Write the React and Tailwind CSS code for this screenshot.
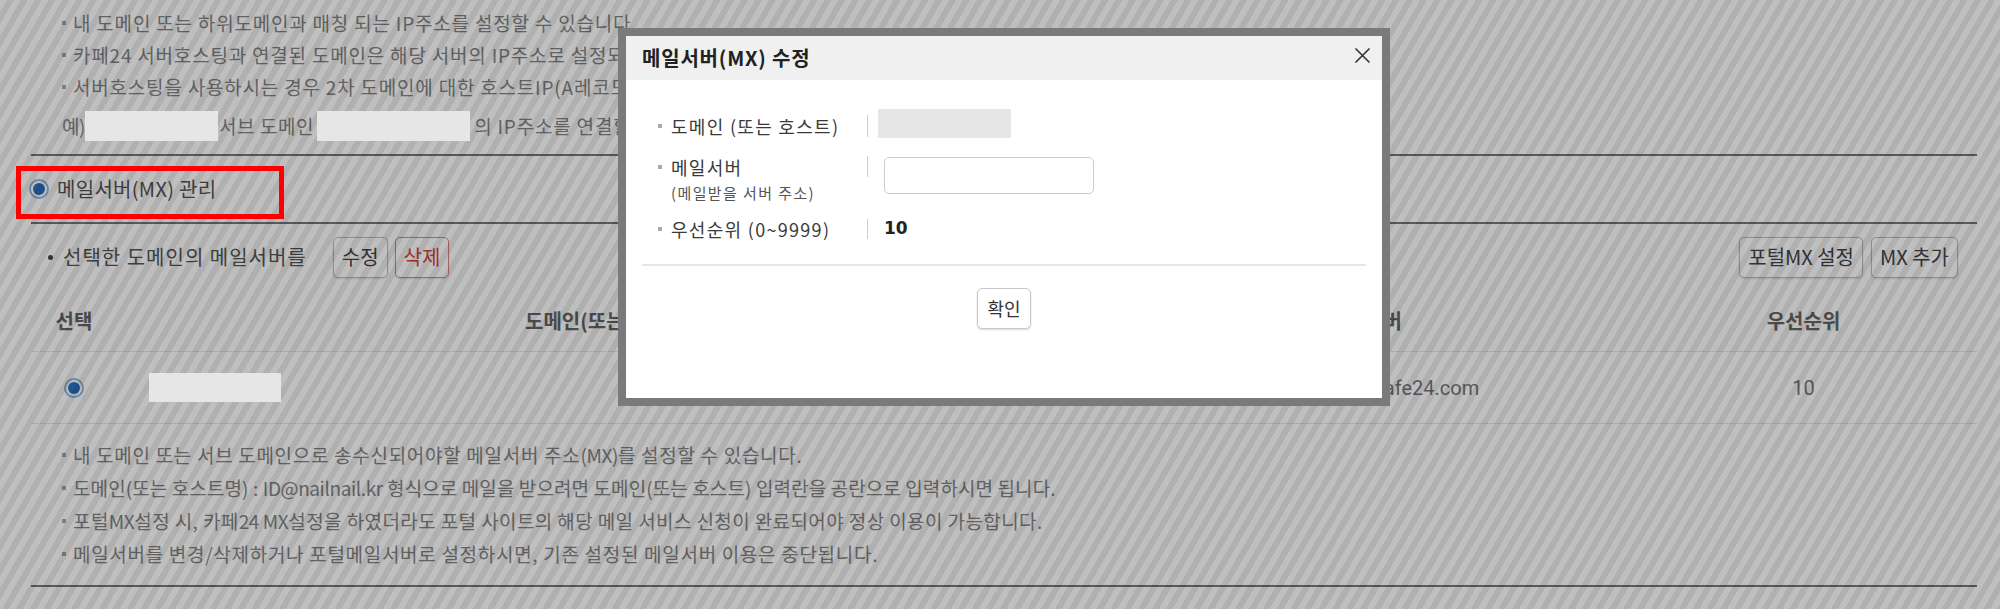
const font = "font-['Noto_Sans_CJK_KR','Noto_Sans',sans-serif]";

function Radio() {
  return (
    <span className="w-[20px] h-[20px] rounded-full border-[2px] border-[#8cb4e0] bg-white flex items-center justify-center shrink-0">
      <span className="w-[12px] h-[12px] rounded-full bg-[#2a70c0]" />
    </span>
  );
}

function Note({ children, className = "" }) {
  return (
    <div className={`flex items-center ${className}`}>
      <span className="w-[4px] h-[4px] bg-[#a8a8a8] mr-[7px] shrink-0" />
      <span>{children}</span>
    </div>
  );
}

// latin runs in the notes are narrower in the original font
function Lat({ children }) {
  return <span className="tracking-[-0.4px]">{children}</span>;
}

function Btn({ children, danger }) {
  return (
    <button
      className={
        danger
          ? "h-[41px] px-[8px] border border-[#e08585] rounded-[5px] bg-white text-[20px] text-[#d8413a] shadow-[0_1px_2px_rgba(0,0,0,0.12)]"
          : "h-[41px] px-[8px] border border-[#bdbdbd] rounded-[5px] bg-white text-[20px] text-[#444] shadow-[0_1px_2px_rgba(0,0,0,0.12)]"
      }
    >
      {children}
    </button>
  );
}

function Redact({ w, h }) {
  return <span className={`relative z-30 inline-block bg-[#e6e6e6] ${w} ${h}`} />;
}

function Modal() {
  return (
    <div className="absolute z-40 left-[618px] top-[28px] w-[772px] h-[378px] border-[8px] border-[#7a7a7a] bg-white flex flex-col">
      <div className="h-[44px] bg-[#f0f0f0] flex items-center justify-between pl-[16px] pr-[11px]">
        <span className="text-[20px] font-bold text-[#222] tracking-[0.8px]">메일서버(MX) 수정</span>
        <svg width="17" height="17" viewBox="0 0 17 17" className="mt-[-6px]">
          <path d="M1.5 1.5 L15.5 15.5 M15.5 1.5 L1.5 15.5" stroke="#333" strokeWidth="1.6" />
        </svg>
      </div>
      <div className="pt-[26px] pl-[32px] flex flex-col">
        <div className="h-[40px] flex items-center">
          <div className="w-[209px] flex items-center">
            <span className="w-[4px] h-[4px] bg-[#aaa] mr-[9px]" />
            <span className="text-[18px] text-[#3a3a3a] tracking-[1.3px]">도메인 (또는 호스트)</span>
          </div>
          <span className="h-[22px] border-l border-[#cfcfcf]" />
          <Redact w="w-[133px] ml-[10px] mt-[-6px]" h="h-[29px]" />
        </div>
        <div className="mt-[8px] flex items-start">
          <div className="w-[209px] flex flex-col">
            <div className="flex items-center h-[26px]">
              <span className="w-[4px] h-[4px] bg-[#aaa] mr-[9px]" />
              <span className="text-[18px] text-[#3a3a3a] tracking-[1.3px]">메일서버</span>
            </div>
            <span className="pl-[13px] h-[26px] leading-[26px] text-[15px] text-[#555] tracking-[1.4px]">(메일받을 서버 주소)</span>
          </div>
          <span className="mt-[2px] h-[21px] border-l border-[#cfcfcf]" />
          <input className="ml-[16px] mt-[3px] w-[210px] h-[37px] border border-[#cccccc] rounded-[5px] outline-none" />
        </div>
        <div className="mt-[8px] h-[30px] flex items-center">
          <div className="w-[209px] flex items-center">
            <span className="w-[4px] h-[4px] bg-[#aaa] mr-[9px]" />
            <span className="text-[18px] text-[#3a3a3a] tracking-[1.3px]">우선순위 (0~9999)</span>
          </div>
          <span className="h-[20px] border-l border-[#cfcfcf]" />
          <span className="ml-[16px] text-[17px] font-bold text-[#222] font-['DejaVu_Sans',sans-serif]">10</span>
        </div>
      </div>
      <div className="mt-[20px] mx-[16px] border-t-2 border-[#e6e6e6]" />
      <div className="mt-[22px] flex justify-center">
        <button className="h-[41px] px-[9px] border border-[#c8c8c8] rounded-[5px] bg-white text-[18px] text-[#333] shadow-[0_1px_2px_rgba(0,0,0,0.15)]">
          확인
        </button>
      </div>
    </div>
  );
}

export default function App() {
  return (
    <div className={`relative w-[2000px] h-[609px] overflow-hidden bg-white ${font}`}>
      {/* top notes */}
      <div className="pl-[62px] pt-[7px] text-[19px] text-[#858585] tracking-[0.8px]">
        <div className="leading-[32px]">
          <Note>내 도메인 또는 하위도메인과 매칭 되는 IP주소를 설정할 수 있습니다.</Note>
          <Note>카페24 서버호스팅과 연결된 도메인은 해당 서버의 IP주소로 설정되어 있습니다.</Note>
          <Note>서버호스팅을 사용하시는 경우 2차 도메인에 대한 호스트IP(A레코드)를 설정할 수 있습니다.</Note>
        </div>
        <div className="mt-[8px] h-[30px] flex items-center">
          <span className="tracking-[-0.5px]">예)</span>
          <Redact w="w-[133px]" h="h-[30px]" />
          <span className="ml-[1px] tracking-[0.6px]">서브 도메인</span>
          <Redact w="w-[153px] ml-[3px]" h="h-[30px]" />
          <span className="ml-[4px]">의 IP주소를 연결할 수 있습니다.</span>
        </div>
      </div>
      <div className="mt-[13px] ml-[31px] mr-[23px] border-t-2 border-[#777]" />

      {/* section heading */}
      <div className="relative h-[66px] pl-[29px] flex items-center gap-[8px]">
        <Radio />
        <span className="text-[20px] text-[#555] tracking-[0.3px]">메일서버(MX) 관리</span>
        <div className="absolute z-30 left-[16px] top-[10px] w-[268px] h-[53px] border-[5px] border-[#ff0000]" />
      </div>
      <div className="ml-[31px] mr-[23px] border-t-2 border-[#777]" />

      {/* toolbar */}
      <div className="ml-[31px] mr-[23px] h-[66px] bg-[#fdfdfd] flex items-center justify-between pl-[17px] pr-[19px]">
        <div className="flex items-center">
          <span className="w-[5px] h-[5px] rounded-full bg-[#444] mr-[10px]" />
          <span className="text-[20px] text-[#555] tracking-[1px]">선택한 도메인의 메일서버를</span>
          <div className="ml-[26px] flex gap-[7px]">
            <Btn>수정</Btn>
            <Btn danger>삭제</Btn>
          </div>
        </div>
        <div className="flex gap-[8px]">
          <Btn>포털MX 설정</Btn>
          <Btn>MX 추가</Btn>
        </div>
      </div>

      {/* table */}
      <div className="ml-[31px] mr-[23px]">
        <div className="h-[62px] grid grid-cols-[86px_983px_530px_1fr] items-center border-b border-[#e5e5e5] bg-[#fdfdfd] text-[20px] font-bold text-[#666] text-center">
          <span>선택</span>
          <span>도메인(또는 호스트)</span>
          <span>메일서버</span>
          <span>우선순위</span>
        </div>
        <div className="h-[72px] grid grid-cols-[86px_983px_530px_1fr] items-center border-b border-[#e5e5e5] text-[20px] text-[#777]">
          <span className="flex justify-center"><Radio /></span>
          <span className="pl-[32px] flex"><Redact w="w-[132px]" h="h-[29px]" /></span>
          <span className="text-center font-['Roboto',sans-serif]">mx.nailnail-kr.cafe24.com</span>
          <span className="text-center font-['Roboto',sans-serif]">10</span>
        </div>
      </div>

      {/* bottom notes */}
      <div className="pl-[62px] pt-[14px] text-[19px] leading-[33px] text-[#858585]">
        <Note className="tracking-[0.7px]">내 도메인 또는 서브 도메인으로 송수신되어야할 메일서버 주소<Lat>(MX)</Lat>를 설정할 수 있습니다.</Note>
        <Note className="tracking-[0.1px]">도메인(또는 호스트명) : <Lat>ID@nailnail.kr</Lat> 형식으로 메일을 받으려면 도메인(또는 호스트) 입력란을 공란으로 입력하시면 됩니다.</Note>
        <Note className="tracking-[0.4px]">포털<Lat>MX</Lat>설정 시, 카페<Lat>24 MX</Lat>설정을 하였더라도 포털 사이트의 해당 메일 서비스 신청이 완료되어야 정상 이용이 가능합니다.</Note>
        <Note className="tracking-[0.7px]">메일서버를 변경/삭제하거나 포털메일서버로 설정하시면, 기존 설정된 메일서버 이용은 중단됩니다.</Note>
      </div>
      <div className="mt-[15px] ml-[31px] mr-[23px] border-t-2 border-[#777]" />

      {/* dim overlay */}
      <div className="absolute inset-0 z-20 bg-[image:repeating-linear-gradient(120deg,rgba(0,0,0,0.25)_0px,rgba(0,0,0,0.25)_6px,rgba(0,0,0,0.31)_6px,rgba(0,0,0,0.31)_12px)]" />

      <Modal />
    </div>
  );
}
